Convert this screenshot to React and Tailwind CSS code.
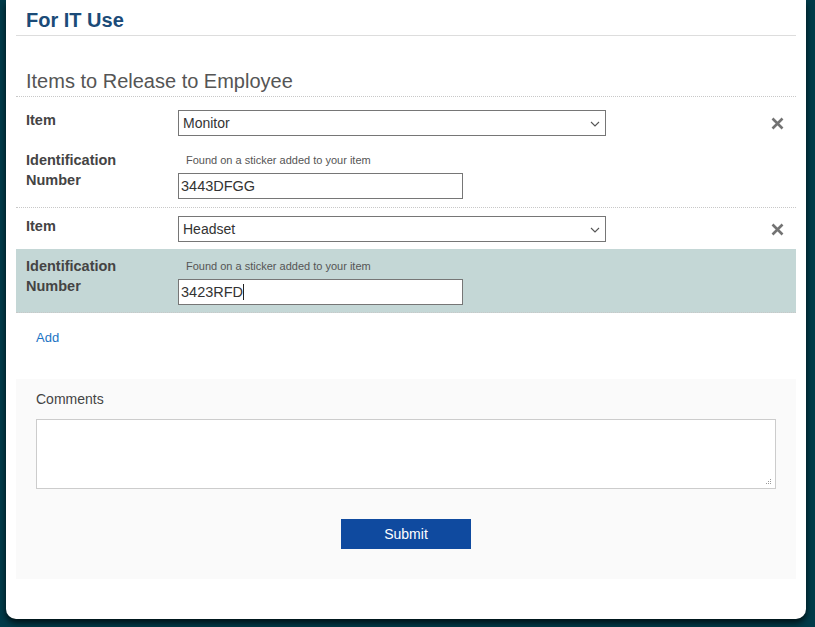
import React from "react";

const XIcon = () => (
  <svg width="13" height="13" viewBox="0 0 13 13">
    <path d="M1.5 1.5 L11.5 11.5 M11.5 1.5 L1.5 11.5" stroke="#737373" strokeWidth="2.6" strokeLinecap="butt" />
  </svg>
);

const Chevron = () => (
  <svg width="10" height="6" viewBox="0 0 10 6" className="absolute right-[5px] top-[10px]">
    <path d="M1 1 L5 5 L9 1" stroke="#555" strokeWidth="1.1" fill="none" />
  </svg>
);

const Select = ({ value }) => (
  <div className="relative w-[428px] h-[26px] border border-[#767676] bg-white pl-[4px] text-[14px] leading-[24px] text-[#333]">
    {value}
    <Chevron />
  </div>
);

const ItemRow = ({ value, top }) => (
  <div className={`flex px-[10px] ${top} pb-[7px]`}>
    <div className="w-[152px] text-[14.5px] font-bold leading-[20px] text-[#444]">Item</div>
    <Select value={value} />
    <div className="flex-1 flex justify-end pr-[2px] pt-[7px]">
      <XIcon />
    </div>
  </div>
);

const IdRow = ({ value, caret, highlight, bottom }) => (
  <div
    className={`flex px-[10px] pt-[7px] ${bottom} border-b border-dotted border-[#c8c8c8] ${
      highlight ? "bg-[#c4d7d6]" : ""
    }`}
  >
    <div className="w-[152px] text-[14.5px] font-bold leading-[20px] text-[#444]">
      Identification
      <br />
      Number
    </div>
    <div className="flex flex-col">
      <div className="pl-[8px] text-[11px] leading-[20px] text-[#555]">
        Found on a sticker added to your item
      </div>
      <div className="mt-[3px] w-[285px] h-[26px] border border-[#767676] bg-white pl-[2px] text-[14.5px] leading-[24px] text-[#333] flex items-center">
        {value}
        {caret && <span className="inline-block w-px h-[16px] bg-[#222]" />}
      </div>
    </div>
  </div>
);

export default function App() {
  return (
    <div
      className="w-[815px] h-[627px] overflow-hidden bg-[#003b49]"
      style={{ fontFamily: '"Liberation Sans", Arial, sans-serif' }}
    >
      <div className="ml-[6px] w-[800px] bg-white rounded-b-[10px] shadow-[0_4px_6px_rgba(0,0,0,0.7)] px-[10px] pb-[40px]">
        <div className="pl-[10px] pt-[8px] pb-[3px] border-b border-[#dddddd] text-[20px] leading-[24px] font-bold text-[#1b4b78]">
          For IT Use
        </div>

        <div className="mt-[33px] pl-[10px] pb-[3px] border-b border-dotted border-[#c8c8c8] text-[20px] leading-[24px] text-[#555]">
          Items to Release to Employee
        </div>

        <ItemRow value="Monitor" top="pt-[13px]" />
        <IdRow value="3443DFGG" bottom="pb-[8px]" />
        <ItemRow value="Headset" top="pt-[8px]" />
        <IdRow value="3423RFD" caret highlight bottom="pb-[7px]" />

        <div className="mt-[15px] pl-[20px] text-[13px] leading-[20px] text-[#1a73c4]">Add</div>

        <div className="mt-[31px] bg-[#fafafa] px-[20px] pt-[10px] pb-[30px]">
          <div className="text-[14px] leading-[20px] text-[#444]">Comments</div>
          <div className="relative mt-[10px] h-[70px] border border-[#cccccc] bg-white">
            <svg width="6" height="6" viewBox="0 0 6 6" className="absolute right-[3px] bottom-[3px]">
              <rect x="4" y="0" width="1" height="1" fill="#999" />
              <rect x="2" y="2" width="1" height="1" fill="#999" />
              <rect x="4" y="2" width="1" height="1" fill="#999" />
              <rect x="0" y="4" width="1" height="1" fill="#999" />
              <rect x="2" y="4" width="1" height="1" fill="#999" />
              <rect x="4" y="4" width="1" height="1" fill="#999" />
            </svg>
          </div>
          <div className="mt-[30px] flex justify-center">
            <button className="w-[130px] h-[30px] bg-[#0f4a9f] text-white text-[14px]">Submit</button>
          </div>
        </div>
      </div>
    </div>
  );
}
